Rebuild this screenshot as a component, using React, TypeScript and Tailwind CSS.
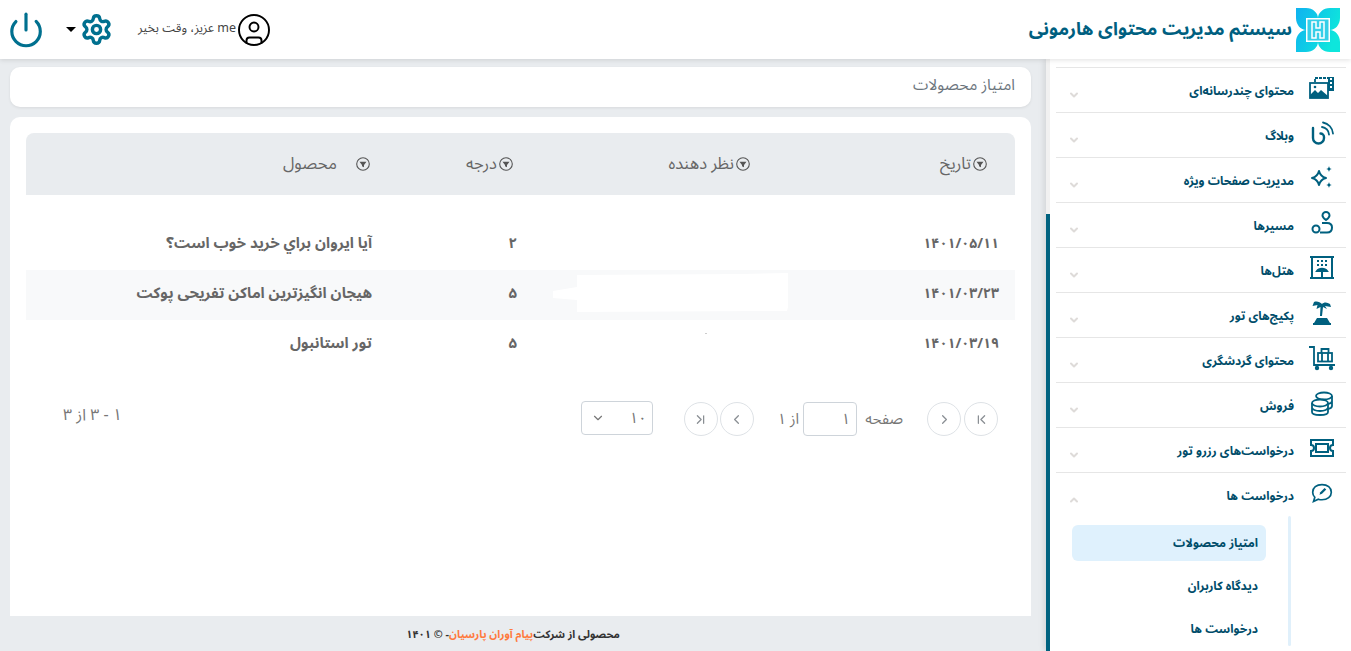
import { ChevronDown, ChevronLeft, ChevronRight, ChevronUp, ChevronFirst, ChevronLast, Power, Settings, CircleUser } from "lucide-react";
import { ReactNode } from "react";

const FONT = "font-['Noto_Sans_Arabic','Noto_Sans','DejaVu_Sans',sans-serif]";

const icon = "w-[26px] h-[26px] text-[#00607f]";

const menu: { label: string; icon: ReactNode }[] = [
  {
    label: "محتوای چندرسانه‌ای",
    icon: (
      <svg viewBox="0 0 26 24" className={icon} fill="none" stroke="currentColor" strokeWidth="1.8">
        <path d="M6 6V2h15" strokeDasharray="3 1" />
        <path d="M19 1h6v14h-6z" fill="currentColor" stroke="none" />
        <path d="M21 3h2M21 7h2M21 11h2" stroke="#fff" strokeWidth="2" />
        <rect x="1" y="7" width="18" height="15" fill="#fff" />
        <path d="M1 22v-3l5-5 3 3 3-3 7 6v2z" fill="currentColor" stroke="none" />
        <circle cx="6" cy="11" r="1.300" fill="currentColor" stroke="none" />
      </svg>
    ),
  },
  {
    label: "وبلاگ",
    icon: (
      <svg viewBox="0 0 26 26" className={icon} fill="none" stroke="currentColor" strokeWidth="2.400" strokeLinecap="round">
        <path d="M4 8v10a5.500 5.500 0 0 0 11 0v-1a3.500 3.500 0 0 0-3.500-3.500" />
        <path d="M13 7a8 8 0 0 1 7 7.500M14 2.500a12 12 0 0 1 10 11" strokeWidth="1.800" />
      </svg>
    ),
  },
  {
    label: "مدیریت صفحات ویژه",
    icon: (
      <svg viewBox="0 0 26 26" className={icon} fill="none" stroke="currentColor" strokeWidth="2" strokeLinejoin="round">
        <path d="M10 6c1 4 3 6 7 7-4 1-6 3-7 7-1-4-3-6-7-7 4-1 6-3 7-7z" />
        <path d="M20 1c.4 2 1 2.600 3 3-2 .4-2.600 1-3 3-.4-2-1-2.600-3-3 2-.4 2.600-1 3-3zM20 17c.4 2 1 2.600 3 3-2 .4-2.600 1-3 3-.4-2-1-2.600-3-3 2-.4 2.600-1 3-3z" fill="currentColor" stroke="none" />
      </svg>
    ),
  },
  {
    label: "مسیرها",
    icon: (
      <svg viewBox="0 0 26 26" className={icon} fill="none" stroke="currentColor" strokeWidth="2">
        <path d="M17 2a3.500 3.500 0 0 1 3.500 3.500c0 2-3.500 4.500-3.500 4.500s-3.500-2.500-3.500-4.500A3.500 3.500 0 0 1 17 2z" />
        <circle cx="7" cy="19" r="3.500" />
        <path d="M13 13h5c3 0 5 1.500 5 4.500s-2 5-5 5h-7" />
      </svg>
    ),
  },
  {
    label: "هتل‌ها",
    icon: (
      <svg viewBox="0 0 26 26" className={icon} fill="none" stroke="currentColor" strokeWidth="2">
        <path d="M1 2h24M3 2v21M23 2v21M1 23h24" />
        <path d="M8 6h2M12 6h2M16 6h2M8 10h2M12 10h2M16 10h2" />
        <path d="M8 16c2-3 8-3 10 0zM13 16v7" fill="currentColor" />
      </svg>
    ),
  },
  {
    label: "پکیج‌های تور",
    icon: (
      <svg viewBox="0 0 26 26" className={icon} fill="currentColor">
        <path d="M5 2c3-1 6 0 8 2 2-2 5-2 8 0l1 3-6-1 2 3-4-2-1 9h-2l.500-9-4 2 1-4-5 1z" />
        <path d="M8 18h10l3 5H5zM4 23h18v2H4z" />
      </svg>
    ),
  },
  {
    label: "محتوای گردشگری",
    icon: (
      <svg viewBox="0 0 26 26" className={icon} fill="none" stroke="currentColor" strokeWidth="1.800">
        <path d="M0 2h5v18h21" />
        <rect x="9" y="8" width="14" height="8.500" />
        <path d="M12.500 8V4h7v4M13 8v8.500M19 8v8.500" />
        <circle cx="8" cy="23" r="1.300" fill="currentColor" />
        <circle cx="22" cy="23" r="1.300" fill="currentColor" />
      </svg>
    ),
  },
  {
    label: "فروش",
    icon: (
      <svg viewBox="0 0 26 26" className={icon} fill="none" stroke="currentColor" strokeWidth="1.800">
        <ellipse cx="15" cy="6" rx="8" ry="3.500" />
        <path d="M23 6v10c0 1.500-1.500 2.500-4 3M23 11c0 1.500-1.500 2.500-4 3" />
        <ellipse cx="11" cy="13" rx="8" ry="3.500" />
        <path d="M3 13v9c0 2 3.500 3 8 3s8-1 8-3v-9M3 17.500c0 2 3.500 3.500 8 3.500s8-1.500 8-3.500" />
      </svg>
    ),
  },
  {
    label: "درخواست‌های رزرو تور",
    icon: (
      <svg viewBox="0 0 26 26" className={icon} fill="none" stroke="currentColor" strokeWidth="2">
        <path d="M2 5h22v5a3 3 0 0 0 0 6v5H2v-5a3 3 0 0 0 0-6z" />
        <rect x="7" y="9" width="12" height="8" />
      </svg>
    ),
  },
];

const SideRow = ({ label, icon, open }: { label: string; icon: ReactNode; open?: boolean }) => (
  <div className="h-[45px] border-t border-[#e6e6e6] flex items-start pr-[10px]">
    <div className="w-[28px] h-[40px] flex items-center justify-center shrink-0">{icon}</div>
    <div className="mr-[14px] mt-[14px] text-[12px] font-bold text-[#004d6a] leading-[20px] whitespace-nowrap">{label}</div>
    <div className="mr-auto ml-[12px] mt-[21px] text-[#dedbd9]">
      {open ? <ChevronUp size={12} strokeWidth={4} /> : <ChevronDown size={12} strokeWidth={4} />}
    </div>
  </div>
);

const Filter = () => (
  <svg viewBox="0 0 14 14" className="w-[14px] h-[14px] shrink-0 text-[#555]">
    <circle cx="7" cy="7" r="6.300" fill="none" stroke="currentColor" strokeWidth="1.100" />
    <path d="M3.500 4.800h7L8 8v2.200L6 9.200V8z" fill="currentColor" />
  </svg>
);

const PageBtn = ({ children }: { children: ReactNode }) => (
  <div className="w-[34px] h-[34px] rounded-full border border-[#dee2e6] flex items-center justify-center text-[#8a8f94]">{children}</div>
);

const rows = [
  { date: "۱۴۰۱/۰۵/۱۱", grade: "۲", title: "آیا ایروان براي خرید خوب است؟" },
  { date: "۱۴۰۱/۰۳/۲۳", grade: "۵", title: "هیجان انگیزترین اماکن تفریحی پوکت" },
  { date: "۱۴۰۱/۰۳/۱۹", grade: "۵", title: "تور استانبول" },
];

export default function App() {
  return (
    <div dir="rtl" className={`${FONT} w-[1351px] h-[651px] overflow-hidden flex flex-col bg-[#e9ecef]`}>
      <header className="h-[59px] shrink-0 bg-white shadow-[0_1px_5px_rgba(0,0,0,0.12)] z-10 flex items-center pr-[11px] pl-[7px]">
        <svg viewBox="0 0 44 44" className="w-[44px] h-[44px] shrink-0">
          <defs>
            <linearGradient id="lg" x1="0" y1="0" x2="1" y2="0.4">
              <stop offset="0" stopColor="#0fb2f0" />
              <stop offset="1" stopColor="#0ee6dc" />
            </linearGradient>
          </defs>
          <path d="M0 0h10c7 0 12 5 12 10 0-5 5-10 12-10h10v10c0 7-5 12-10 12 5 0 10 5 10 12v10H34c-7 0-12-5-12-10 0 5-5 10-12 10H0V34c0-7 5-12 10-12C5 22 0 17 0 10z" fill="url(#lg)" />
          <rect x="10" y="10" width="24" height="24" fill="#fff" />
          <rect x="11.500" y="11.500" width="21" height="21" fill="#35cfe8" />
          <path d="M16 14h4v6h4v-6h4v16h-4v-6h-4v6h-4z" fill="#35cfe8" stroke="#fff" strokeWidth="1.500" />
        </svg>
        <div className="mr-[4px] text-[18.200px] font-bold text-[#005f80] whitespace-nowrap">سیستم مدیریت محتوای هارمونی</div>
        <div className="mr-auto flex items-center">
          <CircleUser size={36} strokeWidth={1.300} className="text-black" />
          <div className="-mt-[3px] text-[12.500px] text-[#444] whitespace-nowrap"><span dir="ltr">me</span> عزیز، وقت بخیر</div>
          <div className="mr-[25px] flex items-center">
            <Settings size={33} strokeWidth={2.500} className="text-[#00708f]" />
            <div className="mr-[4px] w-0 h-0 border-x-[5px] border-x-transparent border-t-[5px] border-t-black" />
          </div>
          <Power size={38} strokeWidth={2} className="mr-[21px] text-[#00708f]" />
        </div>
      </header>

      <div className="flex-1 flex min-h-0">
        <aside className="w-[305px] shrink-0 bg-white flex shadow-[-2px_0_6px_rgba(0,0,0,0.1)]">
          <div className="flex-1 pt-[8px] pr-[5px] pl-[6px]">
            {menu.map((m) => (
              <SideRow key={m.label} label={m.label} icon={m.icon} />
            ))}
            <SideRow
              label="درخواست ها"
              open
              icon={
                <svg viewBox="0 0 26 26" className="w-[22px] h-[22px] text-[#00607f]" fill="none" stroke="currentColor" strokeWidth="2">
                  <path d="M13 3c6.500 0 11 3.800 11 9s-4.500 9-11 9c-1.500 0-3-.2-4.300-.7L3 23l1.500-5C3 16.500 2 14.500 2 12c0-5.200 4.500-9 11-9z" />
                  <path d="M10 15l1-3 5-5 2 2-5 5z" fill="currentColor" stroke="none" />
                </svg>
              }
            />
            <div className="flex -mt-[1px] mr-[55px]">
              <div className="w-[3px] h-[130px] rounded bg-[#e0f0fb] shrink-0" />
              <div className="mr-[22px] w-[194px] pt-[9px] text-[12px] font-bold text-[#004d6a]">
                <div className="h-[36px] rounded-[6px] bg-[#dff1fd] pr-[8px] pt-[2px] flex items-center">امتیاز محصولات</div>
                <div className="h-[43px] pr-[8px] pt-[18px] leading-[16px]">دیدگاه کاربران</div>
                <div className="h-[43px] pr-[8px] pt-[18px] leading-[16px]">درخواست ها</div>
              </div>
            </div>
          </div>
          <div className="w-[4px] bg-[#f1f1f1] shrink-0">
            <div className="mt-[155px] h-[437px] bg-[#00627f]" />
          </div>
        </aside>

        <main className="flex-1 flex flex-col min-w-0 pt-[8px]">
          <div className="mr-[15px] ml-[10px] flex-1 flex flex-col min-h-0">
            <div className="h-[40px] shrink-0 bg-white rounded-[10px] shadow-[0_1px_3px_rgba(0,0,0,0.08)] flex items-center pr-[16px] pb-[3px] text-[15.500px] text-[#6c757d]">امتیاز محصولات</div>
            <div className="mt-[10px] flex-1 bg-white rounded-t-[10px] px-[16px] pt-[16px] text-[#555]">
              <div className="h-[62px] bg-[#e9ecef] rounded-t-[8px] grid grid-cols-[237px_237px_143px_1fr] items-center text-[16.500px] text-[#666]">
                <div className="pr-[28px] flex items-center gap-[2px]"><Filter />تاریخ</div>
                <div className="pr-[28px] flex items-center gap-[2px]"><Filter />نظر دهنده</div>
                <div className="pr-[28px] flex items-center gap-[2px]"><Filter />درجه</div>
                <div className="pr-[28px] flex items-center gap-[19px]"><Filter />محصول</div>
              </div>
              <div className="mt-[25px] text-[15px] font-bold text-[#666]">
                {rows.map((r, i) => (
                  <div key={r.date} className={`h-[50px] pb-[4px] grid grid-cols-[237px_237px_143px_1fr] items-center ${i === 1 ? "bg-[#f8f9fa]" : ""}`}>
                    <div className="pr-[16px] text-[14px]">{r.date}</div>
                    <div className="relative h-full">
                      {i === 1 && (
                        <svg viewBox="0 0 235 40" className="absolute right-[-10px] top-[3px] w-[235px] h-[40px]">
                          <path d="M24 2l166-1 45-1v34l-1 4-210 1V27L0 25v-7l24-4z" fill="#fff" />
                        </svg>
                      )}
                      {i === 2 && <div className="absolute right-[71px] top-[13px] w-[2px] h-px bg-[#ccc]" />}
                    </div>
                    <div className="pr-[24px]">{r.grade}</div>
                    <div className="pr-[26px] whitespace-nowrap">{r.title}</div>
                  </div>
                ))}
              </div>
              <div className="mt-[32px] flex items-center text-[15px] text-[#777]">
                <div className="mr-[17px] flex items-center gap-[3px]">
                  <PageBtn><ChevronLast size={15} className="rotate-180" /></PageBtn>
                  <PageBtn><ChevronRight size={15} /></PageBtn>
                </div>
                <div className="mr-[24px]">صفحه</div>
                <div className="mr-[8px] w-[54px] h-[34px] border border-[#ced4da] rounded-[4px] flex items-center pr-[6px]">۱</div>
                <div className="mr-[4px]">از ۱</div>
                <div className="mr-[24px] flex items-center gap-[2px]">
                  <PageBtn><ChevronLeft size={15} /></PageBtn>
                  <PageBtn><ChevronFirst size={15} className="rotate-180" /></PageBtn>
                </div>
                <div className="mr-[31px] -mt-[2px] w-[72px] h-[34px] border border-[#ced4da] rounded-[4px] flex items-center justify-between pr-[5px] pl-[9px]">
                  <span>۱۰</span>
                  <ChevronDown size={14} />
                </div>
                <div className="mr-auto ml-[37px] -mt-[9px] text-[16px]">۱ - ۳ از ۳</div>
              </div>
            </div>
          </div>
          <footer className="h-[35px] shrink-0 flex items-center justify-center pt-[3px] pr-[20px] text-[10.800px] font-bold text-[#333]">
            محصولی از شرکت<span className="text-[#ff7a3d]">پیام آوران پارسیان</span>- © ۱۴۰۱
          </footer>
        </main>
      </div>
    </div>
  );
}
